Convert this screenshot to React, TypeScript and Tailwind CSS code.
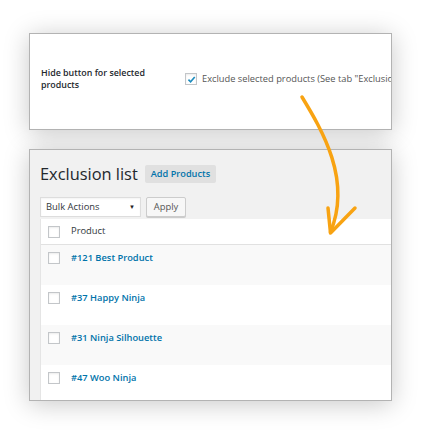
import React from 'react'

const rows = ['#121 Best Product', '#37 Happy Ninja', '#31 Ninja Silhouette', '#47 Woo Ninja']

function Box({ checked = false }: { checked?: boolean }) {
  return (
    <span className="flex h-[12px] w-[12px] shrink-0 items-center justify-center border border-[#c3c6c9] bg-white shadow-[inset_0_1px_2px_rgba(0,0,0,0.08)]">
      {checked && (
        <svg width="9" height="9" viewBox="0 0 10 10">
          <path d="M1.6 5.2 L4 7.6 L8.6 2.2" fill="none" stroke="#1e8cbe" strokeWidth="1.8" />
        </svg>
      )}
    </span>
  )
}

export default function App() {
  return (
    <div className="relative h-[435px] w-[421px] overflow-hidden bg-white pl-[29px] pt-[33px] font-['Open_Sans',sans-serif]">
      {/* settings panel */}
      <div className="h-[97px] w-[363px] overflow-hidden border border-[#b3b3b3] bg-white shadow-[0_3px_24px_rgba(0,0,0,0.22)]">
        <div className="flex pl-[11px] pt-[33px]">
          <div className="w-[144px] shrink-0 text-[8.9px] font-semibold leading-[12px] text-[#23282d]">
            Hide button for selected
            <br />
            products
          </div>
          <div className="flex items-start gap-[5px] whitespace-nowrap pt-[6px]">
            <Box checked />
            <span className="text-[9.3px] leading-[12px] text-[#555]">Exclude selected products (See tab "Exclusions")</span>
          </div>
        </div>
      </div>

      {/* exclusion panel */}
      <div className="mt-[19px] h-[252px] w-[363px] overflow-hidden border border-[#b3b3b3] bg-[#f1f1f1] pl-[10px] shadow-[0_3px_24px_rgba(0,0,0,0.22)]">
        <div className="flex items-center gap-[7px] pt-[12px]">
          <h1 className="text-[16.4px] leading-[24px] font-normal text-[#23282d]">Exclusion list</h1>
          <span className="rounded-[2px] bg-[#e0e0e0] px-[6px] py-[3px] text-[9.2px] font-semibold leading-[12px] text-[#0073aa]">Add Products</span>
        </div>

        <div className="mt-[11px] flex gap-[5px]">
          <div className="flex h-[20px] w-[101px] items-center justify-between border border-[#ddd] bg-white pl-[5px] pr-[5px] text-[9.4px] text-[#32373c] shadow-[inset_0_1px_2px_rgba(0,0,0,0.05)]">
            <span>Bulk Actions</span>
            <span className="text-[6px] text-[#222]">▼</span>
          </div>
          <div className="flex h-[20px] w-[40px] items-center justify-center rounded-[2px] border border-[#ccc] bg-[#f7f7f7] text-[9.4px] text-[#555] shadow-[0_1px_0_#ccc]">
            Apply
          </div>
        </div>

        <div className="mt-[2px] w-[400px] border-l border-[#e5e5e5]">
          <div className="flex h-[26px] items-center border-b border-[#e1e1e1] bg-white pl-[7px]">
            <Box />
            <span className="ml-[11px] text-[9.4px] text-[#32373c]">Product</span>
          </div>
          {rows.map((r, i) => (
            <div key={r} className={`flex h-[40px] items-start pl-[7px] pt-[7px] ${i % 2 === 0 ? 'bg-[#f9f9f9]' : 'bg-white'}`}>
              <Box />
              <span className="ml-[11px] text-[9.3px] font-semibold leading-[12px] text-[#0073aa]">{r}</span>
            </div>
          ))}
        </div>
      </div>

      {/* hand-drawn arrow */}
      <svg className="pointer-events-none absolute left-0 top-0" width="421" height="435" viewBox="0 0 421 435">
        <path d="M302 97 C322 130 352 180 330.5 232" fill="none" stroke="#f8a312" strokeWidth="3.5" strokeLinecap="round" />
        <path d="M328 208 L330.5 233 L355 208" fill="none" stroke="#f8a312" strokeWidth="3.5" strokeLinecap="round" strokeLinejoin="round" />
      </svg>
    </div>
  )
}
